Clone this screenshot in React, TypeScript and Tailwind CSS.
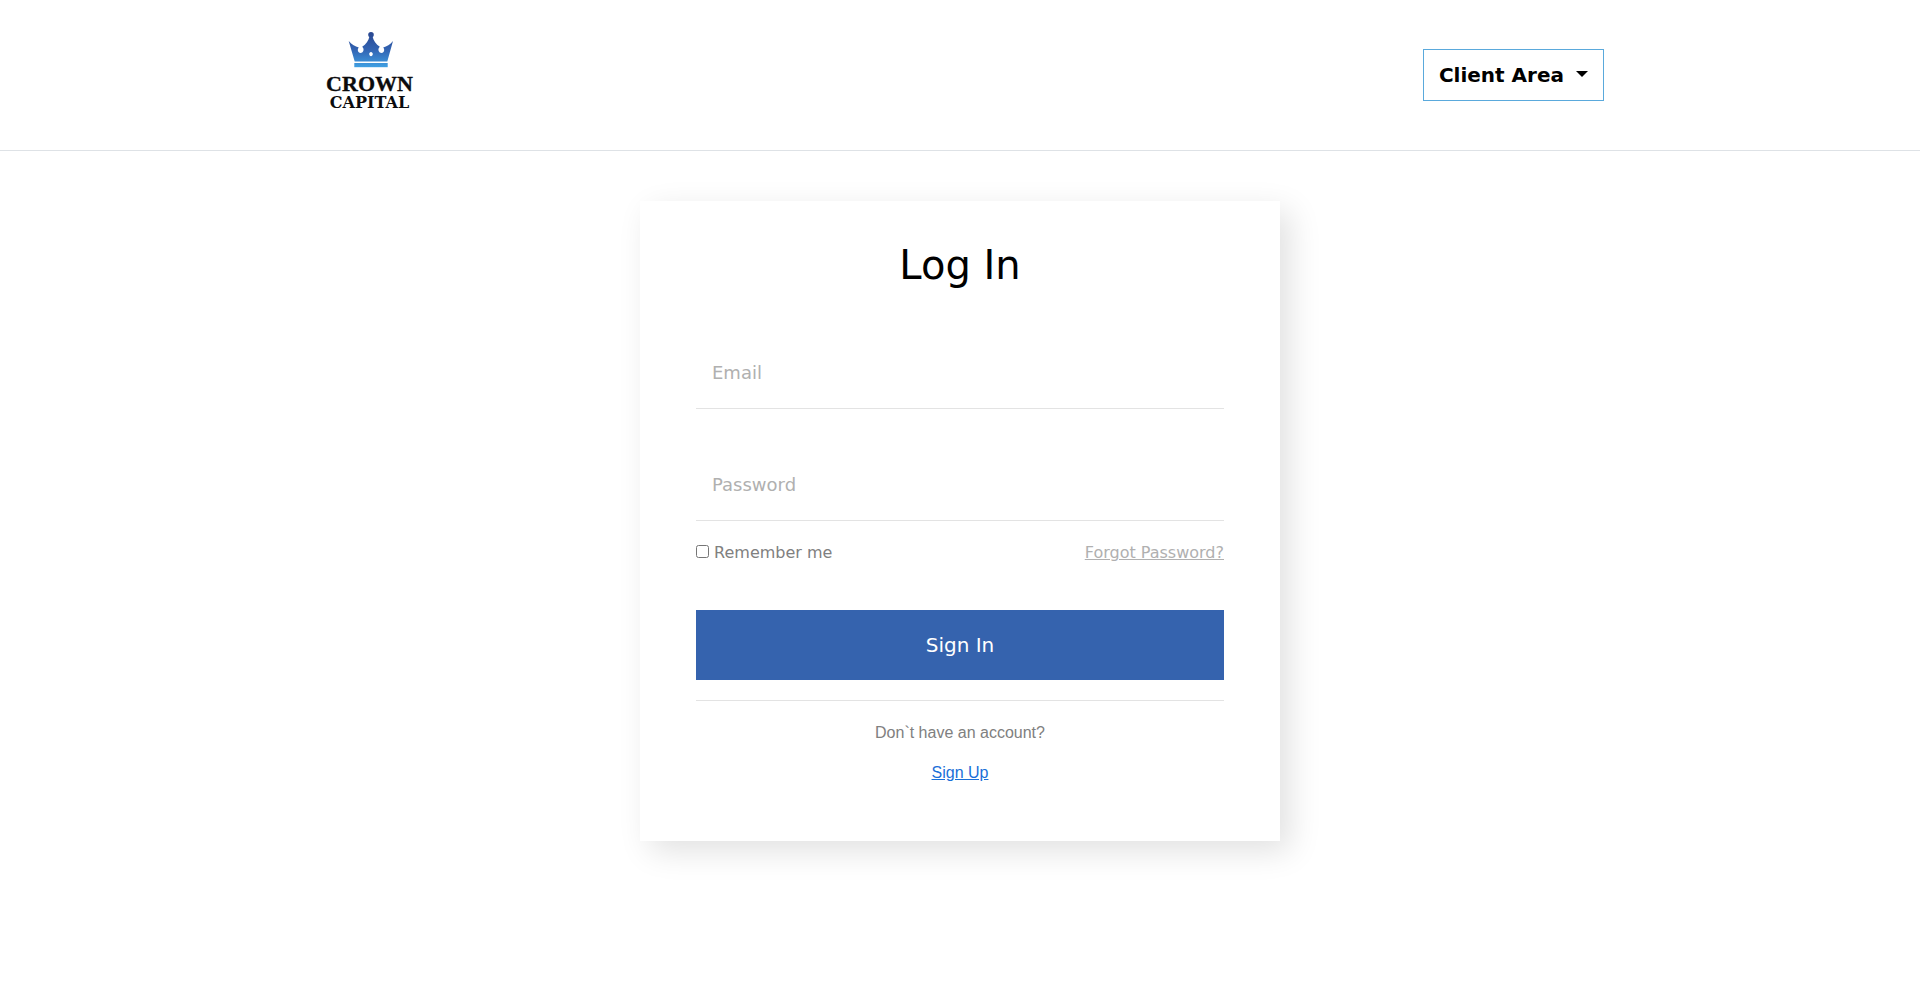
import { useState, type FormEvent } from 'react'

function Logo() {
    return (
        <svg width="108" height="98" viewBox="0 0 108 98" role="img" aria-label="Crown Capital">
            <defs>
                <linearGradient id="crown" x1="0" y1="6" x2="0" y2="41" gradientUnits="userSpaceOnUse">
                    <stop offset="0" stopColor="#2a4790" />
                    <stop offset="0.5" stopColor="#3263b2" />
                    <stop offset="1" stopColor="#3f9fe2" />
                </linearGradient>
            </defs>
            <g fill="url(#crown)">
                <circle cx="55" cy="8.8" r="2.8" />
                <path
                    fillRule="evenodd"
                    d="M53.4 10.8h3.2C57.4 14.6 60 18.2 63.8 20.8C62.5 21.9 62.1 23.6 62.7 25C63.5 27.1 66.2 27.5 67.5 25.9C68.5 24.6 68.4 22.7 67.2 21.4C70.900 20.500 74 18.600 77 15L71.300 35.600H38.700L32.700 15C36 18.600 39.100 20.500 42.800 21.400C41.600 22.700 41.500 24.600 42.500 25.900C43.800 27.500 46.500 27.100 47.300 25C47.900 23.600 47.500 21.900 46.200 20.800C50 18.200 52.600 14.600 53.400 10.800zM55 26C54 26 53.200 27 53.200 28.100C53.200 29.300 54 30.200 55 30.200C56 30.200 56.800 29.300 56.800 28.100C56.800 27 56 26 55 26z"
                />
                <rect x="38.3" y="37" width="33.4" height="4.2" />
            </g>
            <g fill="#0b0b0d" textAnchor="middle" className="font-bold">
                <text x="53.5" y="65" fontSize="22" stroke="#0b0b0d" strokeWidth="0.3" className="font-['Liberation_Serif',serif]">
                    CROWN
                </text>
                <text x="53.5" y="82" fontSize="16" className="font-['DejaVu_Serif',serif]">
                    CAPITAL
                </text>
            </g>
        </svg>
    )
}

function Header() {
    return (
        <header className="border-b border-[#dee2e6]">
            <div className="max-w-[1320px] mx-auto px-4 py-[26px] flex items-center justify-between">
                <a href="/">
                    <Logo />
                </a>
                <button
                    type="button"
                    aria-haspopup="menu"
                    className="h-[52px] px-[15px] flex items-center gap-3 border border-[#5aa9dc] text-xl font-bold text-black"
                >
                    Client Area
                    <svg width="12" height="8" viewBox="0 0 12 8" aria-hidden="true">
                        <path d="M0 0h12L6 6z" fill="currentColor" />
                    </svg>
                </button>
            </div>
        </header>
    )
}

interface FieldProps {
    label: string
    type: string
    value: string
    onChange: (value: string) => void
}

function Field({ label, type, value, onChange }: FieldProps) {
    return (
        <input
            type={type}
            aria-label={label}
            placeholder={label}
            value={value}
            onChange={(e) => onChange(e.target.value)}
            className="w-full h-[72px] px-4 border-b border-[#e3e3e3] text-lg text-gray-700 placeholder:text-[#b0b0b0] outline-none focus:border-[#3563ae]"
        />
    )
}

export default function App() {
    const [email, setEmail] = useState('')
    const [password, setPassword] = useState('')
    const [remember, setRemember] = useState(false)

    const handleSubmit = (e: FormEvent) => {
        e.preventDefault()
    }

    return (
        <div className="min-h-screen bg-white font-['DejaVu_Sans',sans-serif]">
            <Header />
            <main className="px-4 py-[50px]">
                <form
                    onSubmit={handleSubmit}
                    className="max-w-[640px] mx-auto px-14 pt-10 pb-14 bg-white shadow-[10px_10px_30px_rgba(0,0,0,0.12)]"
                >
                    <h1 className="mb-12 text-[40px] leading-12 text-center text-black">Log In</h1>
                    <div className="flex flex-col gap-10">
                        <Field label="Email" type="email" value={email} onChange={setEmail} />
                        <Field label="Password" type="password" value={password} onChange={setPassword} />
                    </div>
                    <div className="mt-5 flex items-center justify-between text-base">
                        <label className="text-[#808080]">
                            <input
                                type="checkbox"
                                checked={remember}
                                onChange={(e) => setRemember(e.target.checked)}
                            />{' '}
                            Remember me
                        </label>
                        <a href="#forgot" className="text-[#b0b0b0] underline">
                            Forgot Password?
                        </a>
                    </div>
                    <button type="submit" className="mt-[45px] w-full h-[70px] bg-[#3563ae] text-xl text-white">
                        Sign In
                    </button>
                    <div className="mt-5 pt-5 border-t border-[#e3e3e3] text-center font-['Liberation_Sans',sans-serif]">
                        <p className="text-[#808080]">Don`t have an account?</p>
                        <p className="mt-4">
                            <a href="#signup" className="text-[#1a6fd8] underline">
                                Sign Up
                            </a>
                        </p>
                    </div>
                </form>
            </main>
        </div>
    )
}
